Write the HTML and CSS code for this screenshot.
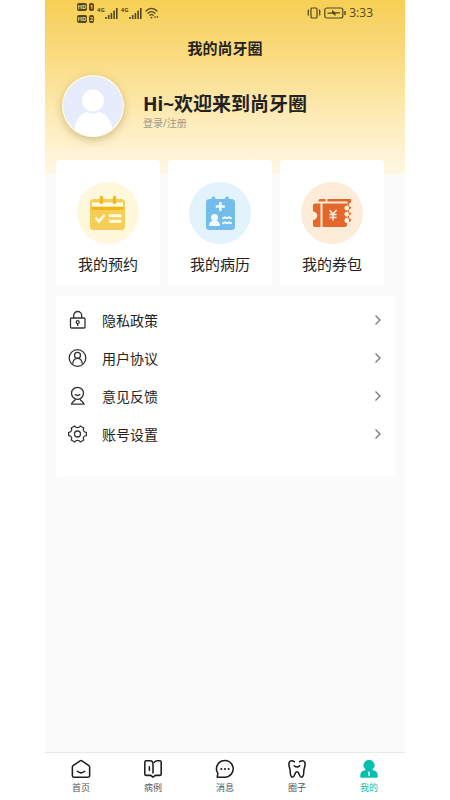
FILE: index.html
```html
<!DOCTYPE html>
<html lang="zh-CN">
<head>
<meta charset="utf-8">
<meta name="viewport" content="width=device-width, initial-scale=1">
<title>我的尚牙圈</title>
<link rel="stylesheet" href="styles.css">
</head>
<body>
<div class="app">
  <div class="status">
    <div class="status-group">
      <div class="sims">
        <span class="sim"><b class="hd">HD</b><b class="slot">1</b></span>
        <span class="sim"><b class="hd">HD</b><b class="slot">2</b></span>
      </div>
      <div class="signal"><span class="net">4G</span><svg width="13" height="12" viewBox="0 0 13 12" fill="none" stroke="currentColor" stroke-width="1.6"><path d="M1 12V10M3.7 12V8M6.4 12V6M9.1 12V3.5M11.8 12V1"/></svg></div>
      <div class="signal"><span class="net">4G</span><svg width="13" height="12" viewBox="0 0 13 12" fill="none" stroke="currentColor" stroke-width="1.6"><path d="M1 12V10M3.7 12V8M6.4 12V6M9.1 12V3.5M11.8 12V1"/></svg></div>
      <svg class="wifi" width="14" height="12" viewBox="0 0 14 12" fill="none" stroke="currentColor" stroke-width="1.3"><path d="M.6 4.2Q6.5-1.4 12.4 4.2M2.6 6.4Q6.5 2.8 10.4 6.4M4.4 8.6Q6.5 6.7 8.6 8.6"/><circle cx="6.5" cy="10.6" r=".9" fill="currentColor" stroke="none"/><path d="M10 9v2M12.3 9v2" stroke-width="1"/></svg>
    </div>
    <div class="status-group status-right">
      <svg width="14" height="12" viewBox="0 0 14 12" fill="none" stroke="currentColor" stroke-width="1.2"><rect x="4" y="1" width="6" height="10" rx="1"/><path d="M1 2.500l.6 1.200-.6 1.200.6 1.200-.6 1.200.6 1.200M13 2.500l-.6 1.200.6 1.200-.6 1.200.6 1.200-.6 1.200"/></svg>
      <svg width="22" height="12" viewBox="0 0 22 12" fill="none" stroke="currentColor" stroke-width="1.2"><rect x=".8" y="1" width="18" height="10" rx="2"/><path d="M21 4v4" stroke-width="1.4"/><path d="M3.500 5.500H8V3l3 2.200h5v1.300h-4.500V9l-3-2.200h-5z" fill="currentColor" stroke="none"/></svg>
      <time class="clock">3:33</time>
    </div>
  </div>

  <h1 class="title">我的尚牙圈</h1>

  <section class="profile">
    <svg class="avatar" viewBox="0 0 62 62" aria-hidden="true"><defs><clipPath id="face"><circle cx="31" cy="31" r="30"/></clipPath></defs><circle cx="31" cy="31" r="30" fill="#e6ecfb"/><g fill="#fff" clip-path="url(#face)"><path d="M12 60c0-15 7-24 19-24s20 9 20 24v4H12z"/><circle cx="31" cy="25.500" r="12" stroke="#e6ecfb" stroke-width="2"/></g><circle cx="31" cy="31" r="30.400" fill="none" stroke="#fffdf4" stroke-width="1.200"/></svg>
    <div class="greeting">
      <h2 class="name">Hi~欢迎来到尚牙圈</h2>
      <a class="login" href="#login">登录/注册</a>
    </div>
  </section>

  <section class="cards">
    <a class="card" href="#booking">
      <svg class="card-icon" viewBox="0 0 62 62" aria-hidden="true"><circle cx="31" cy="31" r="31" fill="#fff8dc"/><rect x="13" y="17" width="35" height="31" rx="3.500" fill="#f5cd57"/><path d="M15 20.500h31v4H15z" fill="#fffbe2"/><path d="M14.500 25h32v3h-32z" fill="#f2b71c"/><path d="M24.500 15.500v5M37.500 15.500v5" stroke="#f2b71c" stroke-width="3.400" stroke-linecap="round"/><path d="M18.500 35.500l3.500 4 5.500-6.500" fill="none" stroke="#fffbe2" stroke-width="2.600"/><path d="M32 33.700h12.500M32 39.200h12.500" stroke="#fffbe2" stroke-width="3"/></svg>
      <span>我的预约</span>
    </a>
    <a class="card" href="#records">
      <svg class="card-icon" viewBox="0 0 62 62" aria-hidden="true"><circle cx="31" cy="31" r="31" fill="#e2f3fe"/><rect x="17" y="17" width="29" height="31" rx="3.500" fill="#73bdec"/><path d="M24.500 16.500v3M38 16.500v3" stroke="#73bdec" stroke-width="4" stroke-linecap="round"/><path d="M31.300 20v9M26.800 24.500h9" stroke="#f0faff" stroke-width="2.600"/><g fill="#f0faff"><circle cx="25.500" cy="35.500" r="3.500"/><path d="M20 44c0-4 2-5.500 5.500-5.500S31 40 31 44z"/></g><path d="M34 36.200l2-.8 2 .8 2-.8 2 .8M34 41.200l2-.8 2 .8 2-.8 2 .8" fill="none" stroke="#f0faff" stroke-width="2" stroke-linecap="round"/></svg>
      <span>我的病历</span>
    </a>
    <a class="card" href="#coupons">
      <svg class="card-icon" viewBox="0 0 62 62" aria-hidden="true"><circle cx="31" cy="31" r="31" fill="#fdecd8"/><g fill="#e4682c"><path d="M17.500 19.500v-1q0-1.500 1.500-1.500h5.500v2.500zM26.500 17H50v3.500a2.200 2.200 0 0 0 0 4.400v1.600a2.200 2.200 0 0 0 0 4.400v1.600a2.200 2.200 0 0 0 0 4.400V38q0 2-3.500 2V19.500h-20z"/><path d="M14 21.500h5.500V45H14q-2 0-2-2v-5a4.200 4.200 0 0 0 0-8.400v-6.100q0-2 2-2zM21.500 21.500H46v2.200a2.400 2.400 0 0 0 0 4.800v1.400a2.400 2.400 0 0 0 0 4.800v1.400a2.400 2.400 0 0 0 0 4.800V43q0 2-2 2H21.500z"/></g><g fill="#fff0df"><circle cx="45.800" cy="26" r="2.300"/><circle cx="45.800" cy="32.200" r="2.300"/><circle cx="45.800" cy="38.400" r="2.300"/></g><path d="M28.500 28l3.500 4 3.500-4M32 32v6.500M28.500 32.500h7M28.500 35.500h7" fill="none" stroke="#fff0df" stroke-width="1.500"/></svg>
      <span>我的券包</span>
    </a>
  </section>

  <nav class="menu" aria-label="设置">
    <a class="row" href="#privacy">
      <svg class="row-icon" viewBox="0 0 20 20"><rect x="2.500" y="8" width="14.500" height="10" rx="1"/><path d="M5.700 8V5.500a4 4 0 0 1 8 0V8M9.700 13.500V16"/><circle cx="9.700" cy="12.200" r="1.500"/></svg>
      <span class="label">隐私政策</span>
      <svg class="chevron" viewBox="0 0 8 12"><path d="M1.500 1.500L6 6l-4.500 4.500"/></svg>
    </a>
    <a class="row" href="#terms">
      <svg class="row-icon" viewBox="0 0 20 20"><circle cx="9.500" cy="10" r="8.300"/><circle cx="9.500" cy="7.300" r="3"/><path d="M4.700 15.800c.3-3.500 2-5.500 4.800-5.500s4.500 2 4.800 5.500"/></svg>
      <span class="label">用户协议</span>
      <svg class="chevron" viewBox="0 0 8 12"><path d="M1.500 1.500L6 6l-4.500 4.500"/></svg>
    </a>
    <a class="row" href="#feedback">
      <svg class="row-icon" viewBox="0 0 20 20"><circle cx="9.500" cy="7.300" r="6"/><path d="M6.800 8.300q2.700 2.400 5.400 0M7.500 13.200c-.5 2-3.500 2-4 5H16c-.5-3-3.500-3-4-5"/></svg>
      <span class="label">意见反馈</span>
      <svg class="chevron" viewBox="0 0 8 12"><path d="M1.500 1.500L6 6l-4.500 4.500"/></svg>
    </a>
    <a class="row" href="#account">
      <svg class="row-icon" viewBox="0 0 20 20"><path d="M6.700 2Q7.500 3.600 9.500 3.600T12.300 2l3.500 2q-.9 1.700-.1 3 .8 1.300 2.700 1.400v3.200q-1.900.1-2.700 1.400-.8 1.300.1 3l-3.500 2q-.8-1.600-2.800-1.600T6.700 18l-3.500-2q.9-1.700.1-3-.8-1.300-2.700-1.400V8.400Q2.500 8.300 3.300 7q.8-1.300-.1-3z" stroke-linejoin="round"/><circle cx="9.500" cy="10" r="3"/></svg>
      <span class="label">账号设置</span>
      <svg class="chevron" viewBox="0 0 8 12"><path d="M1.500 1.500L6 6l-4.500 4.500"/></svg>
    </a>
  </nav>

  <nav class="tabs" aria-label="主导航">
    <a class="tab" href="#home">
      <svg viewBox="0 0 22 22"><path d="M1.500 9q0-1 .8-1.600L10 2q1-.7 2 0l7.700 5.400q.8.600.8 1.600v9.500q0 1.500-1.500 1.500H3q-1.500 0-1.500-1.500zM7 13.500q4 3.500 8 0"/></svg>
      <span>首页</span>
    </a>
    <a class="tab" href="#cases">
      <svg viewBox="0 0 22 22"><path d="M11 15.500V5Q10.500 2 8 2H3.500Q2 2 2 3.500v13.300Q2 18 3.500 18h5l2.500 2 2.500-2h5q1.500 0 1.500-1.200V3.500Q20 2 18.500 2h-2.700Q13.700 2 12.500 3.500M7 8.500v4"/></svg>
      <span>病例</span>
    </a>
    <a class="tab" href="#messages">
      <svg viewBox="0 0 22 22"><path d="M2.500 20l.6-4.200A9.200 9.200 0 1 1 11 20z"/><g fill="#1c1c1c" stroke="none"><circle cx="7" cy="11" r="1.200"/><circle cx="11" cy="11" r="1.200"/><circle cx="15" cy="11" r="1.200"/></g></svg>
      <span>消息</span>
    </a>
    <a class="tab" href="#community">
      <svg viewBox="0 0 22 22"><path d="M8 3Q4.500.500 2.500 3.500c-1.500 3.500 1 6.500 1 9.500 0 4 1 7 2.500 7C9 20 8 14 11 14s2 6 5 6c1.500 0 2.500-3 2.500-7 0-3 2.500-6 1-9.500C17.500.500 14 3 14 3M8 7.500q3 2.500 6 0"/></svg>
      <span>圈子</span>
    </a>
    <a class="tab active" href="#me" aria-current="page">
      <svg viewBox="0 0 22 22"><path d="M11 1.500a5.500 5.500 0 0 1 3.500 9.900q-.5.800.5 1.300 5 1 5 4.500V20H2v-2.800q0-3.500 5-4.500 1-.5.500-1.300A5.500 5.500 0 0 1 11 1.500z" fill="currentColor" stroke-width="1"/><path d="M11 14.500V18" stroke="#e9fffb"/></svg>
      <span>我的</span>
    </a>
  </nav>
</div>
</body>
</html>
```
FILE: styles.css
```css
* {
  box-sizing: border-box;
}

body {
  margin: 0;
  background: #fff;
  color: #222;
  font-family: "Noto Sans", "Noto Sans CJK SC", sans-serif;
}

a {
  color: inherit;
  text-decoration: none;
}

svg {
  display: block;
  flex: none;
}

.app {
  display: flex;
  flex-direction: column;
  width: 80%;
  min-height: 100vh;
  margin: 0 auto;
  background: linear-gradient(#f6cf54 0, #fadc83 60px, #fdecb9 120px, #fff8e3 174px, #fbfbfb 175px);
}

.status {
  display: flex;
  justify-content: space-between;
  height: 28px;
  padding: 2px 32px 0;
  color: #54471d;
}

.status-group {
  display: flex;
  align-items: center;
  gap: 3px;
  height: 22px;
}

.sims {
  display: grid;
  gap: 4px;
}

.sim {
  display: flex;
  gap: 2px;
}

.hd,
.slot {
  border-radius: 2px;
  background: #54471d;
  color: #f8d568;
  font-size: 6px;
  line-height: 8px;
  text-align: center;
}

.hd {
  width: 10px;
}

.slot {
  width: 5px;
}

.signal {
  display: flex;
  align-items: flex-start;
}

.net {
  font-size: 6px;
  font-weight: 700;
  line-height: 6px;
}

.clock {
  font-family: "Open Sans", sans-serif;
  font-size: 12px;
  line-height: 16px;
}

.title {
  margin: 8px 0 0;
  font-size: 15px;
  font-weight: 700;
  line-height: 24px;
  text-align: center;
}

.profile {
  display: flex;
  gap: 19px;
  padding: 15px 17px 23px;
}

.avatar {
  width: 62px;
  height: 62px;
  border-radius: 50%;
  box-shadow: 0 3px 9px rgba(130, 100, 20, .35);
}

.greeting {
  padding-top: 17px;
}

.name {
  margin: 0;
  font-size: 19px;
  font-weight: 700;
  line-height: 24px;
}

.login {
  display: block;
  color: #a29b87;
  font-size: 10px;
  line-height: 14px;
}

.cards {
  display: grid;
  grid-template-columns: repeat(3, 1fr);
  gap: 8px;
  padding: 0 21px 0 11px;
}

.card {
  display: flex;
  flex-direction: column;
  align-items: center;
  gap: 8px;
  padding: 22px 0 9px;
  border-radius: 4px;
  background: #fff;
  font-size: 15px;
  line-height: 24px;
}

.card-icon {
  width: 62px;
  height: 62px;
}

.menu {
  margin: 11px 10px 0 11px;
  padding: 5px 13px 23px 12px;
  border-radius: 4px;
  background: #fff;
}

.row {
  display: flex;
  align-items: center;
  height: 38px;
  font-size: 14px;
}

.row-icon {
  width: 20px;
  height: 20px;
  fill: none;
  stroke: #333;
  stroke-width: 1.3;
}

.label {
  flex: 1;
  margin-left: 14px;
}

.chevron {
  width: 8px;
  height: 12px;
  fill: none;
  stroke: #777;
  stroke-width: 1.3;
}

.tabs {
  display: grid;
  grid-template-columns: repeat(5, 1fr);
  margin-top: auto;
  padding: 6px 0 5px;
  border-top: 1px solid #e8e8e8;
  background: #fff;
}

.tab {
  display: flex;
  flex-direction: column;
  align-items: center;
  gap: 2px;
  color: #555;
  font-size: 9px;
  line-height: 14px;
}

.tab svg {
  width: 20px;
  height: 20px;
  fill: none;
  stroke: #1c1c1c;
  stroke-width: 1.7;
  stroke-linecap: round;
  stroke-linejoin: round;
}

.tab.active {
  color: #08bfaf;
}

.tab.active svg {
  stroke: currentColor;
}
```
